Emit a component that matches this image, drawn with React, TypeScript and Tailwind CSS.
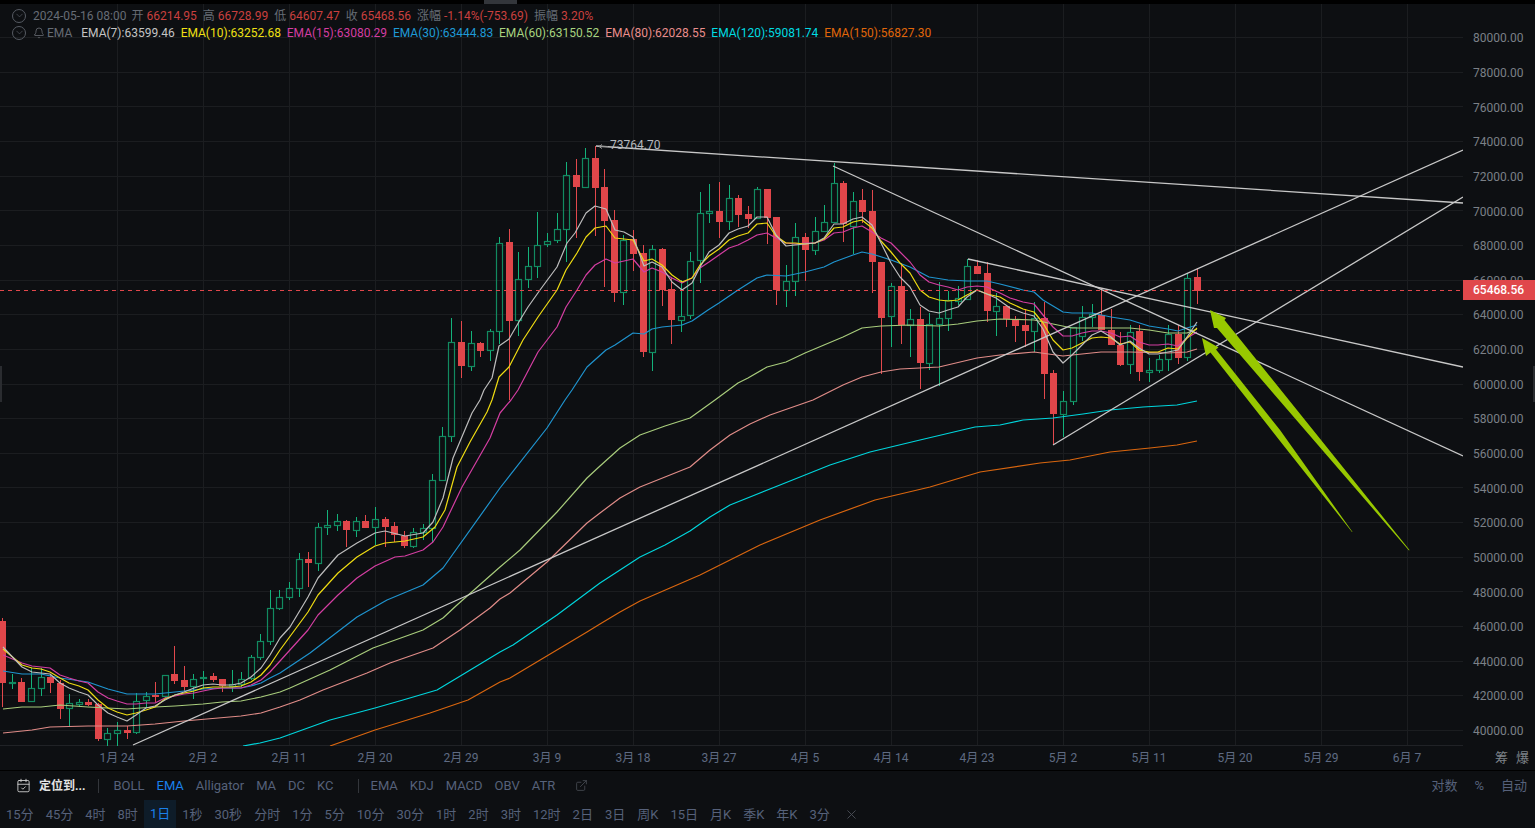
import { Bell, CalendarCheck, ChevronDown, ExternalLink, X } from "lucide-react";

// [rising, body top, body bottom, wick top, wick bottom], one per day, page pixels
const candles: [number, number, number, number, number][] = [
  [0, 621, 683, 618, 707], [1, 682, 683, 674, 689], [0, 682, 702, 678, 702], [1, 688, 701, 668, 701], [1, 677, 688, 668, 696],
  [0, 677, 683, 675, 693], [0, 683, 709, 680, 719], [1, 703, 708, 694, 727], [1, 702, 704, 699, 707], [0, 702, 705, 699, 706],
  [0, 704, 739, 703, 741], [1, 733, 739, 728, 746], [1, 730, 733, 722, 746], [0, 730, 733, 726, 739], [1, 701, 732, 693, 734],
  [1, 696, 700, 692, 707], [0, 695, 697, 682, 702], [1, 675, 696, 675, 698], [0, 674, 681, 646, 684], [0, 680, 687, 666, 691],
  [1, 679, 686, 674, 699], [1, 677, 678, 671, 689], [0, 676, 680, 673, 682], [0, 679, 686, 679, 692], [1, 684, 686, 670, 692],
  [1, 679, 684, 672, 687], [1, 657, 678, 655, 680], [1, 641, 657, 634, 660], [1, 608, 641, 590, 645], [1, 597, 608, 590, 610],
  [1, 588, 597, 582, 600], [1, 559, 588, 553, 597], [0, 559, 563, 552, 587], [1, 527, 563, 523, 571], [1, 525, 527, 510, 535],
  [1, 521, 525, 514, 531], [0, 521, 530, 520, 547], [1, 521, 530, 517, 537], [0, 521, 528, 515, 528], [1, 519, 527, 507, 545],
  [0, 519, 527, 517, 547], [0, 526, 535, 522, 542], [0, 536, 546, 531, 548], [1, 532, 546, 528, 548], [1, 528, 532, 524, 540],
  [1, 480, 528, 474, 542], [1, 436, 480, 427, 480], [1, 342, 436, 318, 442], [0, 342, 366, 321, 378], [1, 343, 366, 331, 371],
  [0, 343, 351, 342, 357], [1, 331, 350, 329, 361], [1, 243, 331, 237, 344], [0, 242, 321, 229, 400], [1, 279, 320, 252, 336],
  [1, 266, 279, 247, 288], [1, 245, 266, 212, 278], [1, 241, 244, 233, 247], [1, 229, 240, 213, 243], [1, 175, 229, 162, 262],
  [0, 175, 187, 159, 238], [1, 158, 187, 148, 187], [0, 158, 188, 146, 236], [0, 187, 221, 169, 287], [0, 220, 293, 210, 302],
  [1, 240, 292, 235, 305], [0, 239, 254, 230, 271], [0, 253, 352, 245, 357], [1, 249, 352, 245, 371], [0, 249, 290, 248, 306],
  [0, 289, 320, 278, 344], [1, 316, 320, 280, 332], [1, 261, 315, 252, 319], [1, 213, 260, 192, 283], [1, 211, 213, 184, 223],
  [0, 211, 222, 182, 238], [1, 198, 221, 185, 230], [0, 198, 215, 195, 227], [0, 214, 219, 206, 228], [1, 189, 218, 187, 218],
  [0, 189, 218, 189, 244], [0, 217, 290, 217, 305], [1, 281, 290, 265, 307], [1, 237, 281, 223, 296], [0, 237, 250, 233, 281],
  [1, 231, 250, 217, 255], [1, 222, 231, 205, 231], [1, 183, 222, 163, 222], [0, 183, 224, 181, 242], [1, 201, 226, 192, 254],
  [0, 200, 212, 189, 223], [0, 211, 262, 190, 293], [0, 262, 318, 262, 374], [1, 286, 316, 283, 347], [0, 286, 325, 263, 344],
  [1, 319, 325, 309, 357], [0, 319, 363, 307, 389], [1, 324, 363, 313, 370], [1, 318, 324, 282, 386], [1, 300, 318, 291, 331],
  [1, 298, 301, 286, 305], [1, 266, 299, 259, 299], [0, 266, 274, 260, 274], [0, 273, 311, 262, 322], [1, 306, 311, 293, 336],
  [0, 306, 319, 306, 327], [0, 319, 326, 316, 342], [0, 325, 331, 309, 347], [1, 318, 331, 302, 352], [0, 318, 374, 302, 399],
  [0, 373, 414, 370, 445], [1, 401, 414, 391, 437], [1, 327, 401, 327, 405], [1, 317, 336, 306, 341], [1, 314, 317, 304, 327],
  [0, 315, 330, 288, 330], [0, 330, 345, 309, 345], [0, 345, 365, 332, 366], [1, 332, 364, 325, 374], [0, 331, 372, 325, 381],
  [1, 370, 372, 358, 382], [1, 359, 370, 355, 373], [1, 334, 359, 325, 371], [0, 334, 358, 325, 364], [1, 278, 357, 273, 361],
  [0, 277, 291, 268, 304],
];

const ema7 =
  "3,647 22,667 32,672 41,673 50,674 60,683 69,688 79,692 88,695 98,705 108,713 117,717 127,721 136,715 146,708 155,706 165,700 175,695 184,692 194,688 203,685 213,684 222,685 232,685 241,683 251,677 261,668 270,655 280,638 290,627 308,597 318,578 338,555 357,543 375,533 385,531 405,536 423,533 433,522 443,498 453,458 472,413 480,400 484,390 492,378 499,346 509,339 520,320 528,307 540,290 557,267 567,243 575,233 586,213 595,206 606,209 615,230 624,232 633,237 644,266 652,262 662,267 672,282 682,290 692,283 700,267 709,252 719,245 729,233 738,229 748,226 757,217 767,217 776,235 786,246 795,245 805,244 815,243 824,238 834,224 843,224 853,219 862,217 872,225 881,243 891,263 900,277 910,287 920,305 929,311 939,313 948,310 958,307 967,297 977,290 987,294 996,298 1010,308 1023,313 1034,316 1043,329 1053,352 1063,363 1072,355 1082,345 1092,335 1101,331 1111,337 1120,345 1130,341 1139,348 1149,354 1158,354 1168,352 1178,350 1187,337 1197,322";
const ema10 =
  "3,649 22,665 32,668 41,669 50,672 60,678 69,683 79,686 88,690 98,700 108,708 117,712 127,715 136,713 146,710 155,707 165,699 175,695 184,693 194,691 203,688 213,687 222,687 232,687 241,686 251,682 261,675 270,665 280,650 308,612 318,595 338,573 357,557 375,546 385,543 405,541 423,537 435,527 445,510 457,467 470,442 487,412 492,400 499,377 509,367 523,340 538,317 557,290 566,270 577,253 586,237 595,228 606,226 615,238 633,240 644,261 652,259 662,265 672,275 682,282 692,278 700,265 709,256 719,249 729,240 738,236 748,233 757,224 767,223 776,236 786,243 795,243 805,244 815,243 824,239 834,228 843,227 853,222 862,220 872,228 881,241 891,252 900,263 910,273 920,290 929,297 939,300 948,301 958,300 967,295 977,290 987,294 1000,297 1010,303 1023,309 1034,312 1043,323 1053,340 1063,350 1072,348 1082,343 1092,338 1101,337 1111,338 1120,344 1130,342 1139,350 1149,352 1158,352 1168,348 1178,349 1187,338 1197,328";
const ema15 =
  "3,655 22,663 32,666 41,667 50,668 60,675 69,678 79,681 88,683 98,692 108,698 117,701 127,704 136,704 146,703 155,703 165,698 175,696 184,694 194,693 203,691 213,689 222,688 232,688 241,688 251,685 261,680 270,672 280,661 308,630 318,615 338,595 357,578 375,566 395,557 405,556 423,550 433,542 443,527 462,487 490,438 500,413 511,400 518,390 538,352 557,327 566,307 577,290 586,275 595,265 606,259 615,263 633,259 644,272 652,268 662,272 672,278 682,283 692,278 700,268 709,262 719,255 729,248 738,245 748,240 757,235 767,233 776,238 786,243 795,244 805,243 815,243 824,240 834,233 843,232 853,228 862,226 872,232 881,238 891,243 900,252 910,262 920,275 929,282 939,285 948,287 958,290 967,287 977,286 987,287 1000,293 1010,298 1023,302 1034,304 1043,315 1053,327 1063,336 1072,336 1082,333 1092,331 1101,331 1111,333 1120,337 1130,336 1139,342 1149,345 1158,345 1168,344 1178,346 1187,338 1197,332";
const ema30 =
  "3,671 22,674 41,674 60,678 88,682 108,689 127,694 155,694 175,692 203,689 222,688 241,688 251,686 261,683 270,678 280,673 310,653 357,617 387,600 423,585 443,568 500,488 547,428 565,400 572,390 587,367 606,350 615,345 633,333 644,334 652,329 662,327 682,325 692,321 708,310 719,303 738,290 757,278 767,275 786,276 805,272 824,267 834,262 853,255 862,252 872,254 891,260 910,267 929,277 948,280 967,281 987,281 1000,284 1023,290 1034,292 1043,300 1063,312 1072,313 1092,313 1111,317 1130,320 1149,326 1168,329 1178,331 1187,328 1197,325";
const ema60 =
  "3,709 22,707 41,707 60,705 88,707 127,709 155,707 175,706 203,704 222,702 241,701 261,697 280,692 290,688 330,670 373,648 423,630 443,618 457,605 500,567 520,550 557,512 587,478 600,466 620,448 640,435 665,426 690,418 715,400 738,383 748,378 767,367 786,362 805,353 824,345 843,337 862,328 881,326 910,325 939,326 958,324 977,321 1000,319 1034,320 1053,324 1072,328 1101,328 1130,328 1149,330 1168,333 1187,333 1197,329";
const ema80 =
  "3,733 32,730 50,727 88,726 127,726 155,724 184,721 241,716 261,713 280,707 300,700 323,690 367,673 390,663 433,648 460,630 490,608 500,599 510,593 547,562 587,523 600,513 620,498 640,487 665,477 690,467 710,450 730,435 750,424 770,415 813,400 843,385 862,377 881,372 900,369 939,367 977,358 1000,355 1034,352 1063,356 1101,352 1130,352 1168,353 1187,352 1197,349";
const ema120 =
  "243,746 260,743 280,738 330,720 375,708 403,700 437,690 457,678 500,652 513,645 557,615 600,583 620,570 640,557 665,545 690,531 710,517 730,505 780,485 830,465 870,452 920,440 975,427 1000,425 1023,420 1053,418 1083,414 1110,410 1143,407 1177,405 1197,401";
const ema150 =
  "330,746 375,730 430,713 468,700 500,682 510,678 587,632 600,624 620,612 640,601 670,588 700,575 730,560 760,545 820,520 875,500 930,487 980,472 1040,463 1070,460 1110,452 1150,448 1177,445 1197,441";

const emaLines: [string, string][] = [
  [ema150, "#d9660f"],
  [ema120, "#00d5dc"],
  [ema80, "#e08c88"],
  [ema60, "#a8cc7c"],
  [ema30, "#1f94cf"],
  [ema15, "#d43ea2"],
  [ema10, "#efdc12"],
  [ema7, "#bdbdbd"],
];

const trendLines = [
  [596, 146, 1463, 203],
  [133, 745, 1463, 150],
  [1053, 445, 1463, 197],
  [833, 166, 1463, 456],
  [968, 259, 1463, 367],
];

const verticals = [117, 203, 289, 375, 461, 547, 633, 719, 805, 891, 977, 1063, 1149, 1235, 1321, 1407, 1463];
const prices = Array.from({ length: 21 }, (_, i) => 80000 - i * 2000);

const emaLegend = [
  { text: "EMA(7):63599.46", color: "text-[#c4c4c4]" },
  { text: "EMA(10):63252.68", color: "text-[#f0e014]" },
  { text: "EMA(15):63080.29", color: "text-[#d43ea2]" },
  { text: "EMA(30):63444.83", color: "text-[#1f9ad6]" },
  { text: "EMA(60):63150.52", color: "text-[#a8d480]" },
  { text: "EMA(80):62028.55", color: "text-[#e98e8c]" },
  { text: "EMA(120):59081.74", color: "text-[#00dce2]" },
  { text: "EMA(150):56827.30", color: "text-[#e0670a]" },
];

const ohlc = [
  ["开", "66214.95"],
  ["高", "66728.99"],
  ["低", "64607.47"],
  ["收", "65468.56"],
  ["涨幅", "-1.14%(-753.69)"],
  ["振幅", "3.20%"],
];

const dates = ["1月 24", "2月 2", "2月 11", "2月 20", "2月 29", "3月 9", "3月 18", "3月 27", "4月 5", "4月 14", "4月 23", "5月 2", "5月 11", "5月 20", "5月 29", "6月 7"];
const overlays = ["BOLL", "EMA", "Alligator", "MA", "DC", "KC"];
const indicators = ["EMA", "KDJ", "MACD", "OBV", "ATR"];
const periods = ["15分", "45分", "4时", "8时", "1日", "1秒", "30秒", "分时", "1分", "5分", "10分", "30分", "1时", "2时", "3时", "12时", "2日", "3日", "周K", "15日", "月K", "季K", "年K", "3分"];

const Chart = () => (
  <svg viewBox="0 4 1463 742" width={1463} height={742} className="block shrink-0">
    {prices.map((p, i) => {
      const y = Math.round(37 + i * 34.65) + 0.5;
      return <line key={p} x1={0} x2={1463} y1={y} y2={y} stroke="#1b1d20" />;
    })}
    {verticals.map((x) => (
      <line key={x} x1={x + 0.5} x2={x + 0.5} y1={4} y2={746} stroke="#1b1d20" />
    ))}
    <line x1={0} x2={1463} y1={745.5} y2={745.5} stroke="#202226" />

    {candles.map(([up, top, bottom, high, low], i) => {
      const x = Math.round(2.3 + i * 9.556);
      if (up) {
        return (
          <g key={i}>
            <line x1={x + 0.5} x2={x + 0.5} y1={high} y2={top} stroke="#13b27a" />
            <line x1={x + 0.5} x2={x + 0.5} y1={bottom} y2={low} stroke="#13b27a" />
            <rect x={x - 2.5} y={top + 0.5} width={6} height={Math.max(bottom - top, 1)} fill="none" stroke="#128a60" strokeWidth={1.2} />
          </g>
        );
      }
      return (
        <g key={i}>
          <line x1={x + 0.5} x2={x + 0.5} y1={high} y2={low} stroke="#e2484c" />
          <rect x={x - 3} y={top} width={7} height={Math.max(bottom - top, 2)} fill="#e0464a" />
        </g>
      );
    })}

    {emaLines.map(([points, color]) => (
      <polyline key={color} points={points} fill="none" stroke={color} strokeWidth={1.2} strokeLinejoin="round" />
    ))}
    {trendLines.map(([x1, y1, x2, y2]) => (
      <line key={x1} x1={x1} y1={y1} x2={x2} y2={y2} stroke="#c8c8c8" strokeWidth={1.3} />
    ))}

    <line x1={0} x2={1463} y1={290.5} y2={290.5} stroke="#e2484c" strokeDasharray="4 4" />

    <polygon points="1210,310 1226,318 1224.5,320 1409.5,550 1409,550.5 1217,328 1214,328" fill="#98c800" />
    <polygon points="1202,338 1218.5,347.5 1216,349.5 1280,430 1352.5,532 1352,532 1280,441 1210.5,352.5 1206,356" fill="#98c800" />

    <path d="M599 146.5h9M599 146.5l3-2M599 146.5l3 2" stroke="#9a9a9a" fill="none" />
    <text x={610} y={149} fill="#b4b8bd" fontSize={12} fontFamily="Roboto, sans-serif">
      73764.70
    </text>
  </svg>
);

export default function App() {
  return (
    <div className="relative w-[1535px] h-[828px] overflow-hidden flex flex-col bg-[#0d0f12] [font-family:Roboto,'Noto_Sans_CJK_SC',sans-serif]">
      <div className="relative h-[4px] shrink-0 bg-black">
        <div className="absolute left-[484px] top-0 w-[33px] h-[4px] bg-[#33363b]" />
      </div>

      <div className="relative flex h-[742px] shrink-0">
        <Chart />
        <div className="flex-1 flex flex-col pt-[17px] pl-[10px] text-xs text-[#7b8087]">
          {prices.map((p) => (
            <div key={p} className="h-[34.65px] shrink-0 flex items-center">
              {p.toFixed(2)}
            </div>
          ))}
        </div>

        {/* legend over the chart */}
        <div className="absolute left-[12px] top-[3px] flex flex-col text-xs">
          <div className="flex items-center h-[17px]">
            <span className="flex items-center justify-center w-[14px] h-[14px] rounded-full border border-[#565b63] text-[#565b63]">
              <ChevronDown size={11} strokeWidth={1.5} />
            </span>
            <span className="ml-[7px] text-[#666c75]">2024-05-16 08:00</span>
            <div className="ml-[5px] flex gap-[6px]">
              {ohlc.map(([label, value]) => (
                <span key={label} className="flex gap-[3px]">
                  <span className="text-[#666c75]">{label}</span>
                  <span className="text-[#c9403f]">{value}</span>
                </span>
              ))}
            </div>
          </div>
          <div className="flex items-center h-[17px]">
            <span className="flex items-center justify-center w-[14px] h-[14px] rounded-full border border-[#565b63] text-[#565b63]">
              <ChevronDown size={11} strokeWidth={1.5} />
            </span>
            <Bell size={12} strokeWidth={1.5} className="ml-[7px] text-[#6d7279]" />
            <span className="ml-[2px] text-[#666c75]">EMA</span>
            <div className="ml-[9px] flex gap-[5.85px]">
              {emaLegend.map((e) => (
                <span key={e.text} className={e.color}>
                  {e.text}
                </span>
              ))}
            </div>
          </div>
        </div>

        {/* last price tag */}
        <div className="absolute left-[1463px] top-[276px] w-[72px] h-[20px] flex items-center pl-[10px] bg-[#e0484b] text-xs font-medium text-white">
          65468.56
        </div>
        <div className="absolute left-0 top-[362px] w-[2px] h-[36px] bg-[#2a2c30]" />
        <div className="absolute right-0 top-[362px] w-[2px] h-[36px] bg-[#2a2c30]" />
      </div>

      <div className="h-[24px] shrink-0 flex items-center pl-[74px] text-xs text-[#5f6b82]">
        {dates.map((d) => (
          <span key={d} className="w-[86px] shrink-0 text-center">
            {d}
          </span>
        ))}
        <span className="ml-[45px] text-[13px] text-[#7d8288]">筹</span>
        <span className="ml-[8px] text-[13px] text-[#7d8288]">爆</span>
      </div>

      <div className="h-[30px] shrink-0 border-t border-black flex items-center text-[13px] text-[#56617a] pl-[16px] pr-[8px]">
        <CalendarCheck size={15} strokeWidth={1.4} className="text-[#d4d4d4]" />
        <span className="ml-[8px] text-xs font-bold text-[#e4e4e4]">定位到...</span>
        <span className="ml-[13px] w-px h-[14px] bg-[#33363b]" />
        <div className="ml-[14px] flex gap-[12px]">
          {overlays.map((o) => (
            <span key={o} className={o === "EMA" ? "text-[#1a80ea]" : ""}>
              {o}
            </span>
          ))}
        </div>
        <span className="ml-[24px] w-px h-[14px] bg-[#33363b]" />
        <div className="ml-[12px] flex gap-[12px]">
          {indicators.map((o) => (
            <span key={o}>{o}</span>
          ))}
        </div>
        <ExternalLink size={13} strokeWidth={1.5} className="ml-[20px] text-[#4a4e55]" />
        <div className="ml-auto flex gap-[17px]">
          <span>对数</span>
          <span>%</span>
          <span>自动</span>
        </div>
      </div>

      <div className="flex-1 flex items-stretch text-[13px] text-[#56617a]">
        {periods.map((p) => (
          <span key={p} className={p === "1日" ? "flex items-center px-[6px] bg-[#0e1c29] text-[#1a80ea]" : "flex items-center px-[6px] pt-px"}>
            {p}
          </span>
        ))}
        <span className="flex items-center ml-[8px] text-[#4a4e55]">
          <X size={15} strokeWidth={1.5} />
        </span>
      </div>
    </div>
  );
}
